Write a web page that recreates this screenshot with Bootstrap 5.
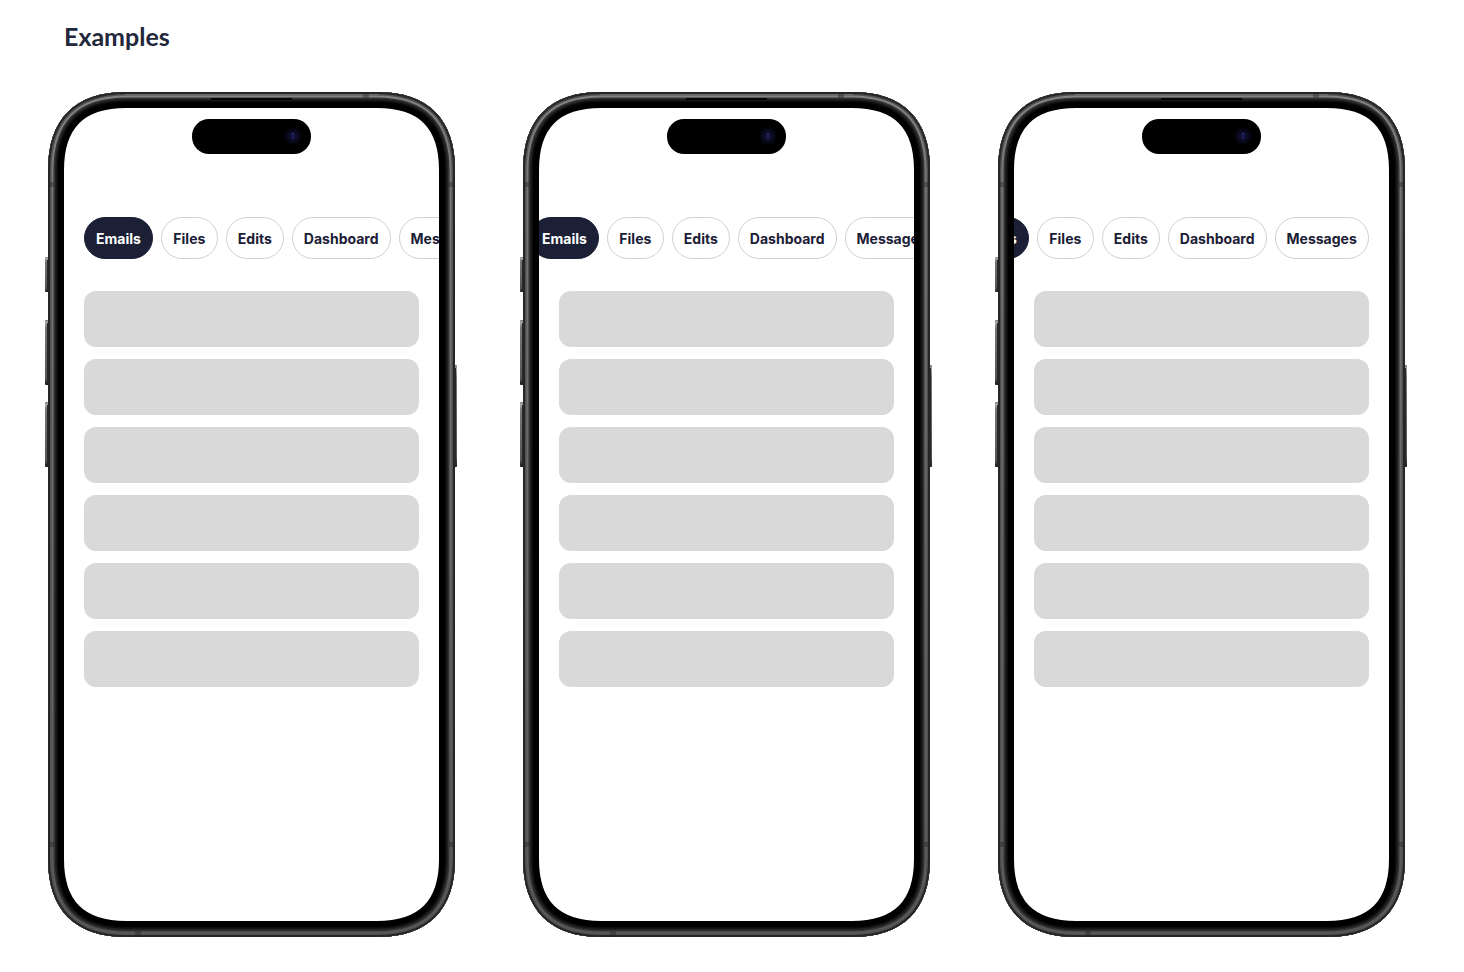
<!DOCTYPE html>
<html lang="en">
<head>
<meta charset="utf-8">
<meta name="viewport" content="width=device-width, initial-scale=1">
<title>Examples</title>
<link rel="stylesheet" href="https://cdn.jsdelivr.net/npm/bootstrap@5.3.0/dist/css/bootstrap.min.css">
<style>
  :root { --ink: #1b2036; }
  body { background: #fff; color: var(--ink); font-family: Inter, "Liberation Sans", sans-serif; }
  .page { padding: 20px 48px 32px; }
  .page-title { font: 700 25px/32px Lato, "Liberation Sans", sans-serif; margin: 0 16px 40px; color: #22273b; }
  .phones { gap: 35px 68px; }
  .phone { width: 407px; min-height: 845px; padding: 16px; }
  .phone-frame { position: absolute; top: 0; left: -3px; width: 413px; height: 845px; pointer-events: none; }
  .screen { min-height: 813px; border-radius: 54px; padding-top: 109px; background: #fff; }
  .tab-strip { gap: 8px; padding: 0 20px; overflow-x: auto; scrollbar-width: none; }
  .tab-strip::-webkit-scrollbar { display: none; }
  .tab-pill { flex: none; height: 42px; min-width: 57px; padding: 1px 11px 0; border: 1px solid #cfcfd8; border-radius: 21px; background: #fff; color: var(--ink); font-size: 14px; line-height: 20px; font-weight: 700; }
  .tab-pill.active { background: var(--ink); border-color: var(--ink); color: #fff; }
  .item-list { gap: 12px; margin: 32px 20px 0; }
  .item-slot { height: 56px; border-radius: 12px; background: #d9d9d9; }
</style>
</head>
<body>
<svg class="position-absolute" width="0" height="0" aria-hidden="true">
  <defs>
    <path id="outline" d="M81 0H332C383 0 410 27 410 78V767C410 818 383 845 332 845H81C30 845 3 818 3 767V78C3 27 30 0 81 0Z"/>
    <clipPath id="body-clip"><use href="#outline"/></clipPath>
    <linearGradient id="rim" x1="0" y1="0" x2="0" y2="1">
      <stop offset="0" stop-color="#858383"/><stop offset=".12" stop-color="#757474"/>
      <stop offset=".9" stop-color="#5c5b5b"/><stop offset="1" stop-color="#585757"/>
    </linearGradient>
    <linearGradient id="key" x1="0" y1="0" x2="0" y2="1">
      <stop offset="0" stop-color="#777"/><stop offset=".04" stop-color="#aaa"/><stop offset=".12" stop-color="#777"/>
      <stop offset=".9" stop-color="#555"/><stop offset="1" stop-color="#151515"/>
    </linearGradient>
    <radialGradient id="lens">
      <stop offset="0" stop-color="#17174a"/><stop offset=".45" stop-color="#0c0c26"/><stop offset="1" stop-color="#020203"/>
    </radialGradient>
    <symbol id="frame" viewBox="0 0 413 845">
      <g fill="url(#key)">
        <rect x="0" y="165" width="4" height="35" rx="1"/>
        <rect x="0" y="228" width="4" height="65" rx="1"/>
        <rect x="0" y="310" width="4" height="65" rx="1"/>
        <rect x="408" y="273" width="4" height="102" rx="1"/>
      </g>
      <g fill="#292929">
        <rect x="2" y="168" width="2" height="31"/><rect x="2" y="231" width="2" height="61"/>
        <rect x="2" y="313" width="2" height="61"/><rect x="409" y="276" width="2" height="98"/>
      </g>
      <g fill="none" clip-path="url(#body-clip)">
        <use href="#outline" stroke="#000" stroke-width="32"/>
        <use href="#outline" stroke="#0c0c0c" stroke-width="20"/>
        <use href="#outline" stroke="#1f1f1f" stroke-width="17"/>
        <use href="#outline" stroke="#333" stroke-width="14"/>
        <use href="#outline" stroke="url(#rim)" stroke-width="11"/>
        <use href="#outline" stroke="#525151" stroke-width="7"/>
        <use href="#outline" stroke="#262626" stroke-width="4"/>
        <path d="M80 3H333" stroke="#6d6c6c" stroke-width="2"/>
        <path d="M166 7H247" stroke="#050505" stroke-width="2"/>
        <path d="M318 3H324M90 842H96M6 90V95M6 750V755M407 90V95M407 750V755" stroke="#222" stroke-width="6" stroke-opacity=".4"/>
      </g>
      <rect x="147" y="27" width="119" height="35" rx="17" fill="#000"/>
      <circle cx="248" cy="44" r="9" fill="url(#lens)"/>
      <circle cx="248" cy="42" r="1" fill="#303080"/><circle cx="248" cy="46" r="1" fill="#282870"/>
    </symbol>
  </defs>
</svg>

<main class="page">
  <h1 class="page-title">Examples</h1>
  <div class="phones d-flex flex-wrap" id="phones"></div>
</main>

<template id="phone-template">
  <section class="phone position-relative">
    <div class="screen overflow-hidden">
      <nav class="tab-strip d-flex" aria-label="Sections">
        <button type="button" class="tab-pill active">Emails</button>
        <button type="button" class="tab-pill">Files</button>
        <button type="button" class="tab-pill">Edits</button>
        <button type="button" class="tab-pill">Dashboard</button>
        <button type="button" class="tab-pill">Messages</button>
      </nav>
      <div class="item-list d-flex flex-column">
        <div class="item-slot"></div><div class="item-slot"></div><div class="item-slot"></div>
        <div class="item-slot"></div><div class="item-slot"></div><div class="item-slot"></div>
      </div>
    </div>
    <svg class="phone-frame" aria-hidden="true"><use href="#frame"/></svg>
  </section>
</template>

<script src="https://cdn.jsdelivr.net/npm/bootstrap@5.3.0/dist/js/bootstrap.bundle.min.js"></script>
<script>
  // Start, partly scrolled and fully scrolled tab strips
  const template = document.getElementById('phone-template');
  [0, 29, 76].forEach(offset => {
    const phone = template.content.cloneNode(true).firstElementChild;
    document.getElementById('phones').append(phone);
    phone.querySelector('.tab-strip').scrollLeft = offset;
  });
</script>
</body>
</html>
